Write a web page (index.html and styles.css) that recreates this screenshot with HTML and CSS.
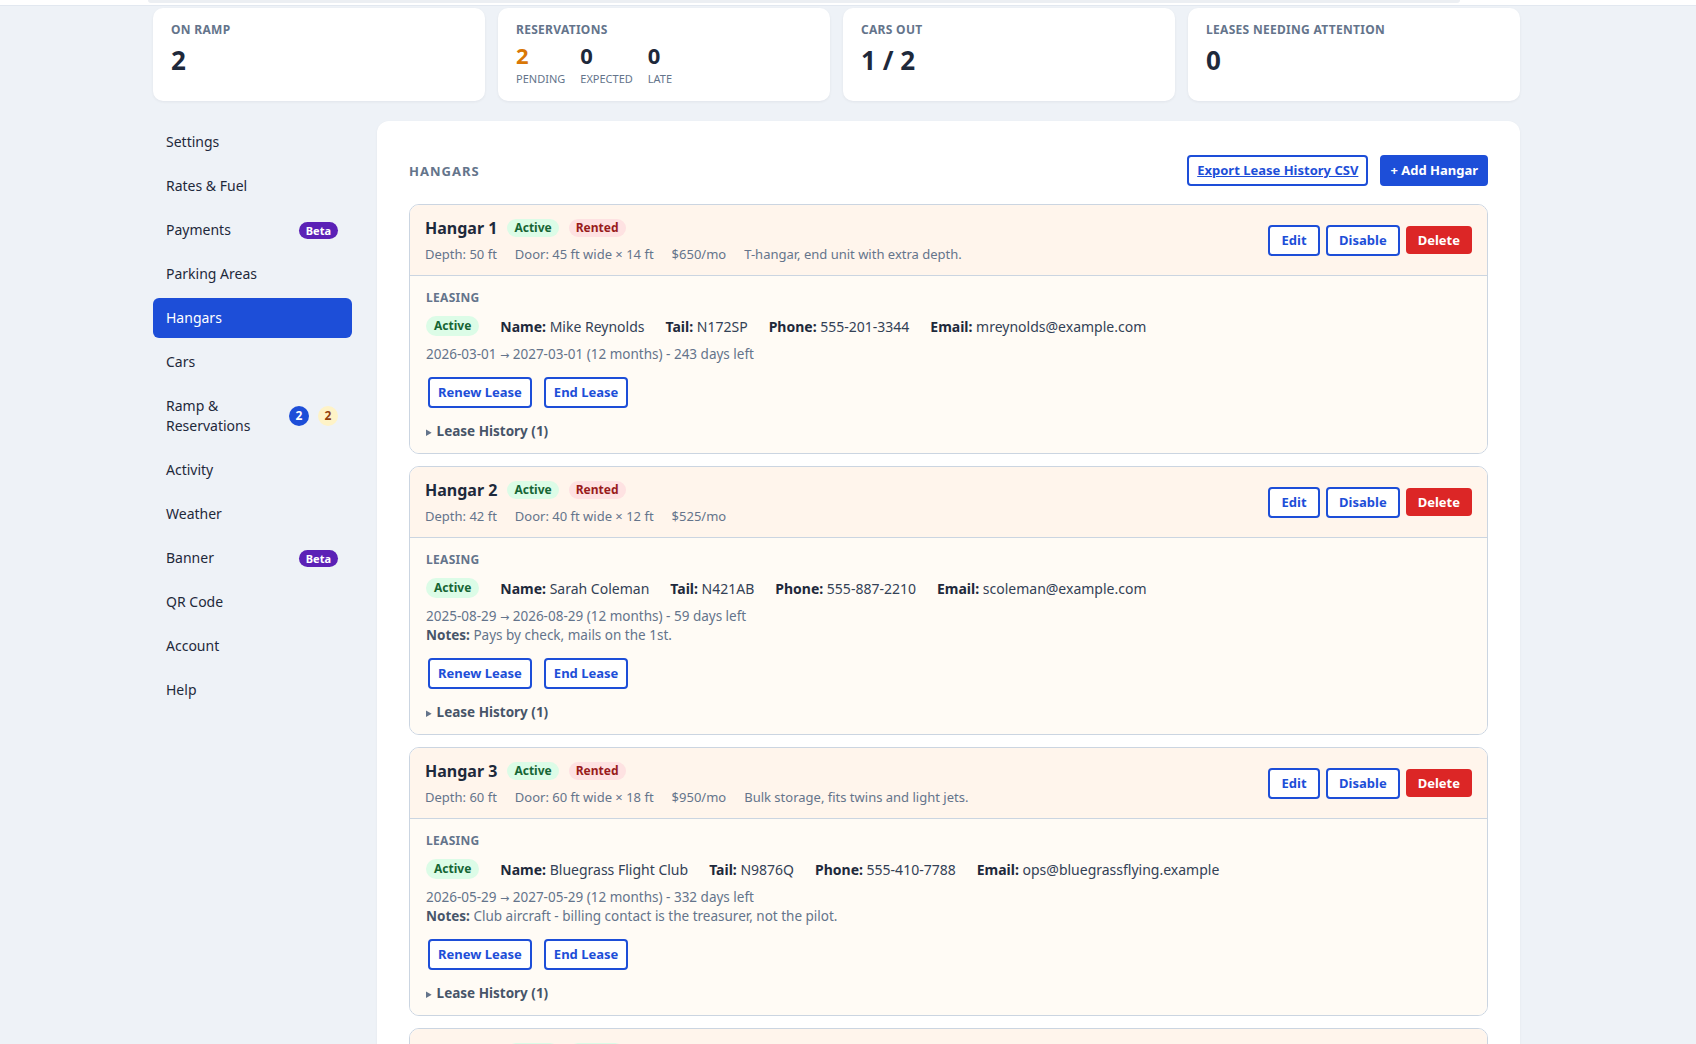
FILE: index.html
```html
<!DOCTYPE html>
<html lang="en">
<head>
    <meta charset="UTF-8">
    <title>Admin - Hangars</title>
    <meta name="viewport" content="width=device-width, initial-scale=1.0">
    <link rel="stylesheet" href="styles.css">
</head>
<body>
    <div class="topbar"><div class="topbar-inner"></div></div>

    <div class="page">
        <div class="stats">
            <div class="stat-card">
                <div class="stat-label">On Ramp</div>
                <div class="stat-value">2</div>
            </div>
            <div class="stat-card">
                <div class="stat-label">Reservations</div>
                <div class="stat-split">
                    <div class="split-item">
                        <div class="split-value pending">2</div>
                        <div class="split-label">Pending</div>
                    </div>
                    <div class="split-item">
                        <div class="split-value">0</div>
                        <div class="split-label">Expected</div>
                    </div>
                    <div class="split-item">
                        <div class="split-value">0</div>
                        <div class="split-label">Late</div>
                    </div>
                </div>
            </div>
            <div class="stat-card">
                <div class="stat-label">Cars Out</div>
                <div class="stat-value">1 / 2</div>
            </div>
            <div class="stat-card">
                <div class="stat-label">Leases Needing Attention</div>
                <div class="stat-value">0</div>
            </div>
        </div>

        <div class="layout">
            <nav class="sidebar">
                <a class="nav-item" href="#">Settings</a>
                <a class="nav-item" href="#">Rates &amp; Fuel</a>
                <a class="nav-item" href="#"><span>Payments</span><span class="beta">Beta</span></a>
                <a class="nav-item" href="#">Parking Areas</a>
                <a class="nav-item active" href="#">Hangars</a>
                <a class="nav-item" href="#">Cars</a>
                <a class="nav-item" href="#">
                    <span class="nav-text">Ramp &amp; Reservations</span>
                    <span class="counts"><span class="count count-blue">2</span><span class="count count-yellow">2</span></span>
                </a>
                <a class="nav-item" href="#">Activity</a>
                <a class="nav-item" href="#">Weather</a>
                <a class="nav-item" href="#"><span>Banner</span><span class="beta">Beta</span></a>
                <a class="nav-item" href="#">QR Code</a>
                <a class="nav-item" href="#">Account</a>
                <a class="nav-item" href="#">Help</a>
            </nav>

            <main class="panel">
                <div class="panel-head">
                    <h2>Hangars</h2>
                    <div class="panel-actions">
                        <button class="btn btn-outline btn-link">Export Lease History CSV</button>
                        <button class="btn btn-primary">+ Add Hangar</button>
                    </div>
                </div>

                <div class="hangar">
                    <div class="hangar-head">
                        <div>
                            <div class="hangar-title">
                                <h3>Hangar 1</h3>
                                <span class="pill pill-green">Active</span>
                                <span class="pill pill-red">Rented</span>
                            </div>
                            <div class="hangar-meta">
                                <span>Depth: 50 ft</span>
                                <span>Door: 45 ft wide × 14 ft</span>
                                <span>$650/mo</span>
                                <span>T-hangar, end unit with extra depth.</span>
                            </div>
                        </div>
                        <div class="hangar-actions">
                            <button class="btn btn-outline btn-edit">Edit</button>
                            <button class="btn btn-outline">Disable</button>
                            <button class="btn btn-danger">Delete</button>
                        </div>
                    </div>
                    <div class="hangar-body">
                        <div class="section-label">Leasing</div>
                        <div class="lease-row">
                            <span class="pill pill-green pill-lg">Active</span>
                            <span><b>Name:</b> Mike Reynolds</span>
                            <span><b>Tail:</b> N172SP</span>
                            <span><b>Phone:</b> 555-201-3344</span>
                            <span><b>Email:</b> mreynolds@example.com</span>
                        </div>
                        <div class="lease-line">2026-03-01 <span class="arrow">→</span> 2027-03-01 (12 months) - 243 days left</div>
                        <div class="lease-actions">
                            <button class="btn btn-outline">Renew Lease</button>
                            <button class="btn btn-outline">End Lease</button>
                        </div>
                        <details class="history"><summary>Lease History (1)</summary></details>
                    </div>
                </div>

                <div class="hangar">
                    <div class="hangar-head">
                        <div>
                            <div class="hangar-title">
                                <h3>Hangar 2</h3>
                                <span class="pill pill-green">Active</span>
                                <span class="pill pill-red">Rented</span>
                            </div>
                            <div class="hangar-meta">
                                <span>Depth: 42 ft</span>
                                <span>Door: 40 ft wide × 12 ft</span>
                                <span>$525/mo</span>
                            </div>
                        </div>
                        <div class="hangar-actions">
                            <button class="btn btn-outline btn-edit">Edit</button>
                            <button class="btn btn-outline">Disable</button>
                            <button class="btn btn-danger">Delete</button>
                        </div>
                    </div>
                    <div class="hangar-body">
                        <div class="section-label">Leasing</div>
                        <div class="lease-row">
                            <span class="pill pill-green pill-lg">Active</span>
                            <span><b>Name:</b> Sarah Coleman</span>
                            <span><b>Tail:</b> N421AB</span>
                            <span><b>Phone:</b> 555-887-2210</span>
                            <span><b>Email:</b> scoleman@example.com</span>
                        </div>
                        <div class="lease-line">2025-08-29 <span class="arrow">→</span> 2026-08-29 (12 months) - 59 days left</div>
                        <div class="lease-notes"><b>Notes:</b> Pays by check, mails on the 1st.</div>
                        <div class="lease-actions">
                            <button class="btn btn-outline">Renew Lease</button>
                            <button class="btn btn-outline">End Lease</button>
                        </div>
                        <details class="history"><summary>Lease History (1)</summary></details>
                    </div>
                </div>

                <div class="hangar">
                    <div class="hangar-head">
                        <div>
                            <div class="hangar-title">
                                <h3>Hangar 3</h3>
                                <span class="pill pill-green">Active</span>
                                <span class="pill pill-red">Rented</span>
                            </div>
                            <div class="hangar-meta">
                                <span>Depth: 60 ft</span>
                                <span>Door: 60 ft wide × 18 ft</span>
                                <span>$950/mo</span>
                                <span>Bulk storage, fits twins and light jets.</span>
                            </div>
                        </div>
                        <div class="hangar-actions">
                            <button class="btn btn-outline btn-edit">Edit</button>
                            <button class="btn btn-outline">Disable</button>
                            <button class="btn btn-danger">Delete</button>
                        </div>
                    </div>
                    <div class="hangar-body">
                        <div class="section-label">Leasing</div>
                        <div class="lease-row">
                            <span class="pill pill-green pill-lg">Active</span>
                            <span><b>Name:</b> Bluegrass Flight Club</span>
                            <span><b>Tail:</b> N9876Q</span>
                            <span><b>Phone:</b> 555-410-7788</span>
                            <span><b>Email:</b> ops@bluegrassflying.example</span>
                        </div>
                        <div class="lease-line">2026-05-29 <span class="arrow">→</span> 2027-05-29 (12 months) - 332 days left</div>
                        <div class="lease-notes"><b>Notes:</b> Club aircraft - billing contact is the treasurer, not the pilot.</div>
                        <div class="lease-actions">
                            <button class="btn btn-outline">Renew Lease</button>
                            <button class="btn btn-outline">End Lease</button>
                        </div>
                        <details class="history"><summary>Lease History (1)</summary></details>
                    </div>
                </div>

                <div class="hangar">
                    <div class="hangar-head">
                        <div>
                            <div class="hangar-title">
                                <h3>Hangar 4</h3>
                                <span class="pill pill-green">Active</span>
                                <span class="pill pill-green">Vacant</span>
                            </div>
                            <div class="hangar-meta">
                                <span>Depth: 45 ft</span>
                                <span>Door: 42 ft wide × 12 ft</span>
                                <span>$575/mo</span>
                            </div>
                        </div>
                        <div class="hangar-actions">
                            <button class="btn btn-outline btn-edit">Edit</button>
                            <button class="btn btn-outline">Disable</button>
                            <button class="btn btn-danger">Delete</button>
                        </div>
                    </div>
                    <div class="hangar-body">
                        <div class="section-label">Leasing</div>
                        <div class="lease-line">No active lease.</div>
                        <div class="lease-actions">
                            <button class="btn btn-outline">+ New Lease</button>
                        </div>
                    </div>
                </div>
            </main>
        </div>
    </div>
</body>
</html>
```

FILE: styles.css
```css
        * {
            box-sizing: border-box;
        }
        body {
            font-family: "Noto Sans", "Liberation Sans", sans-serif;
            margin: 0;
            padding: 0;
            background-color: #eef2f7;
            color: #1e293b;
        }
        .topbar {
            background-color: #fff;
            height: 6px;
            border-bottom: 1px solid #e2e8f0;
        }
        .topbar-inner {
            margin-left: 148px;
            width: 1312px;
            height: 3px;
            background-color: #eceff3;
            border-radius: 0 0 6px 6px;
        }
        .page {
            width: 1367px;
            margin-left: 153px;
            padding: 2px 0 40px;
        }

        /* stat cards */
        .stats {
            display: grid;
            grid-template-columns: repeat(4, 1fr);
            gap: 13px;
        }
        .stat-card {
            background-color: #fff;
            border-radius: 10px;
            padding: 14px 18px 15px;
            box-shadow: 0 1px 3px rgba(15, 23, 42, 0.06);
        }
        .stat-label {
            font-size: 12px;
            line-height: 16px;
            font-weight: 700;
            text-transform: uppercase;
            letter-spacing: 0.3px;
            color: #64748b;
        }
        .stat-value {
            font-size: 26px;
            line-height: 32px;
            font-weight: 700;
            margin-top: 6px;
            color: #1e293b;
        }
        .stat-split {
            display: flex;
            gap: 15px;
            margin-top: 4px;
        }
        .split-value {
            font-size: 22px;
            line-height: 26px;
            font-weight: 700;
        }
        .split-value.pending {
            color: #d97706;
        }
        .split-label {
            font-size: 11px;
            line-height: 14px;
            margin-top: 4px;
            text-transform: uppercase;
            color: #64748b;
        }

        /* layout */
        .layout {
            display: flex;
            align-items: flex-start;
            gap: 25px;
            margin-top: 20px;
        }
        .sidebar {
            width: 199px;
            flex-shrink: 0;
            display: flex;
            flex-direction: column;
            gap: 4px;
            padding-top: 1px;
        }
        .nav-item {
            display: flex;
            align-items: center;
            justify-content: space-between;
            gap: 8px;
            padding: 10px 14px 10px 13px;
            font-size: 14px;
            line-height: 20px;
            color: #1e293b;
            text-decoration: none;
            border-radius: 6px;
        }
        .nav-item.active {
            background-color: #1d4ed8;
            color: #fff;
        }
        .nav-text {
            flex: 1;
        }
        .beta {
            background-color: #5b21b6;
            color: #fff;
            font-size: 11px;
            font-weight: 700;
            line-height: 17px;
            padding: 0 7px;
            border-radius: 9px;
        }
        .counts {
            display: flex;
            gap: 9px;
        }
        .count {
            width: 20px;
            height: 20px;
            border-radius: 50%;
            font-size: 12px;
            font-weight: 700;
            line-height: 20px;
            text-align: center;
        }
        .count-blue {
            background-color: #1d4ed8;
            color: #fff;
        }
        .count-yellow {
            background-color: #fef3c7;
            color: #92400e;
        }

        /* main panel */
        .panel {
            flex: 1;
            background-color: #fff;
            border-radius: 12px;
            padding: 34px 32px 32px;
            box-shadow: 0 1px 3px rgba(15, 23, 42, 0.05);
        }
        .panel-head {
            display: flex;
            align-items: center;
            justify-content: space-between;
            margin-bottom: 18px;
        }
        .panel-head h2 {
            margin: 0;
            font-size: 13px;
            font-weight: 700;
            letter-spacing: 1px;
            text-transform: uppercase;
            color: #64748b;
        }
        .panel-actions {
            display: flex;
            gap: 12px;
        }
        .panel-actions .btn {
            padding: 5px 8px;
        }

        .btn {
            font-family: inherit;
            font-size: 13px;
            font-weight: 700;
            line-height: 17px;
            padding: 5px 11px;
            border-radius: 4px;
            cursor: pointer;
        }
        .btn-outline {
            background-color: #fff;
            border: 2px solid #1d4ed8;
            color: #1d4ed8;
        }
        .btn-edit {
            min-width: 52px;
        }
        .btn-link {
            text-decoration: underline;
        }
        .btn-primary {
            background-color: #1d4ed8;
            border: 2px solid #1d4ed8;
            color: #fff;
        }
        .btn-danger {
            background-color: #dc2626;
            border: none;
            color: #fff;
            line-height: 18px;
            padding: 5px 12px;
        }

        /* hangar cards */
        .hangar {
            border: 1px solid #cbd5e1;
            border-radius: 10px;
            overflow: hidden;
            margin-bottom: 12px;
        }
        .hangar-head {
            display: flex;
            align-items: center;
            justify-content: space-between;
            background-color: #fff5ec;
            padding: 12px 15px;
            border-bottom: 1px solid #cbd5e1;
        }
        .hangar-title {
            display: flex;
            align-items: center;
            gap: 10px;
        }
        .hangar-title h3 {
            margin: 0;
            font-size: 16px;
            line-height: 22px;
            font-weight: 700;
            color: #1e293b;
        }
        .hangar-meta {
            display: flex;
            gap: 18px;
            margin-top: 6px;
            font-size: 13px;
            line-height: 18px;
            color: #64748b;
        }
        .hangar-actions {
            display: flex;
            align-items: center;
            gap: 6px;
        }
        .pill {
            font-size: 12px;
            font-weight: 700;
            line-height: 18px;
            padding: 0 7px;
            border-radius: 9px;
        }
        .pill-lg {
            line-height: 20px;
            padding: 0 8px;
            border-radius: 10px;
        }
        .pill-green {
            background-color: #dcfce7;
            color: #166534;
        }
        .pill-red {
            background-color: #fee2e2;
            color: #991b1b;
        }
        .hangar-body {
            background-color: #fffbf5;
            padding: 14px 16px 12px;
        }
        .section-label {
            font-size: 12px;
            line-height: 16px;
            font-weight: 700;
            letter-spacing: 0.3px;
            text-transform: uppercase;
            color: #64748b;
        }
        .lease-row {
            display: flex;
            align-items: center;
            gap: 21px;
            margin-top: 9px;
            height: 22px;
            font-size: 14px;
            color: #334155;
        }
        .lease-row b {
            color: #1e293b;
        }
        .lease-line {
            margin-top: 8px;
            font-size: 13.5px;
            line-height: 19px;
            height: 19px;
            color: #64748b;
        }
        .arrow {
            font-family: "DejaVu Sans", sans-serif;
            font-size: 11px;
            line-height: 1;
        }
        .lease-notes {
            font-size: 13.5px;
            line-height: 19px;
            color: #64748b;
        }
        .lease-notes b {
            color: #475569;
        }
        .lease-actions {
            display: flex;
            gap: 12px;
            margin-top: 13px;
            padding-left: 2px;
        }
        .lease-actions .btn {
            padding: 5px 8px;
        }
        .history {
            margin-top: 14px;
        }
        .history summary {
            font-size: 13.5px;
            line-height: 18px;
            font-weight: 700;
            color: #475569;
            cursor: pointer;
        }
        .history summary::marker {
            font-size: 10px;
            color: #64748b;
        }
```
